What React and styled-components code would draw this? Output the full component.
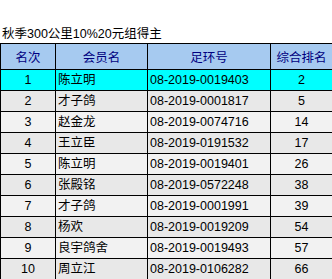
import React from "react";
import styled, { createGlobalStyle } from "styled-components";

const Global = createGlobalStyle`
  html, body { margin: 0; padding: 0; background: #ffffff; }
  body { font-family: "Liberation Sans", "Noto Sans CJK SC", sans-serif; }
`;

const Page = styled.div`
  width: 332px;
  display: flex;
  flex-direction: column;
`;

const Title = styled.div`
  padding: 26px 0 0 2px;
  height: 17px;
  line-height: 17px;
  font-size: 12.5px;
  color: #000;
  font-family: "Liberation Sans", "Noto Sans CJK SC", sans-serif;
  white-space: nowrap;
`;

const Table = styled.table`
  border-collapse: collapse;
  table-layout: fixed;
  width: 332px;
  font-size: 12.5px;
  font-family: "Liberation Sans", "Noto Sans CJK SC", sans-serif;
`;

const HeadCell = styled.th`
  background: #a6caf0;
  color: #000080;
  font-weight: normal;
  height: 25px;
  padding: 0;
  border: 1px solid #000;
  text-align: center;
  vertical-align: middle;
`;

const Row = styled.tr`
  background: ${(p) => (p.$hl ? "#00ffff" : p.$even ? "#e8e8e8" : "#f2f2f2")};
`;

const Cell = styled.td`
  height: 20px;
  padding: 0 0 0 ${(p) => (p.$align === "left" ? "2px" : "0")};
  border: 1px solid #000;
  color: #000;
  text-align: ${(p) => p.$align || "center"};
  vertical-align: middle;
  white-space: nowrap;
  line-height: 16px;
`;

const data = [
  [1, "陈立明", "08-2019-0019403", 2],
  [2, "才子鸽", "08-2019-0001817", 5],
  [3, "赵金龙", "08-2019-0074716", 14],
  [4, "王立臣", "08-2019-0191532", 17],
  [5, "陈立明", "08-2019-0019401", 26],
  [6, "张殿铭", "08-2019-0572248", 38],
  [7, "才子鸽", "08-2019-0001991", 39],
  [8, "杨欢", "08-2019-0019209", 54],
  [9, "良宇鸽舍", "08-2019-0019493", 57],
  [10, "周立江", "08-2019-0106282", 66],
];

export default function App() {
  return (
    <Page>
      <Global />
      <Title>秋季300公里10%20元组得主</Title>
      <Table>
        <colgroup>
          <col style={{ width: 55 }} />
          <col style={{ width: 92 }} />
          <col style={{ width: 123 }} />
          <col style={{ width: 62 }} />
        </colgroup>
        <thead>
          <tr>
            <HeadCell>名次</HeadCell>
            <HeadCell>会员名</HeadCell>
            <HeadCell>足环号</HeadCell>
            <HeadCell>综合排名</HeadCell>
          </tr>
        </thead>
        <tbody>
          {data.map((r, i) => (
            <Row key={i} $hl={i === 0} $even={i % 2 === 1}>
              <Cell>{r[0]}</Cell>
              <Cell $align="left">{r[1]}</Cell>
              <Cell $align="left">{r[2]}</Cell>
              <Cell>{r[3]}</Cell>
            </Row>
          ))}
        </tbody>
      </Table>
    </Page>
  );
}
